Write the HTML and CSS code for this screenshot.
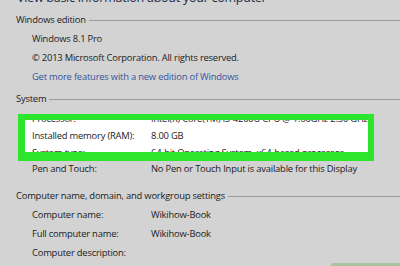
FILE: index.html
```html
<!DOCTYPE html>
<html>
<head>
<meta charset="utf-8">
<link rel="stylesheet" href="styles.css">
</head>
<body>
<div class="page">
  <div class="title">View basic information about your computer</div>

  <section class="group edition">
    <div class="heading">Windows edition</div>
    <div class="line">Windows 8.1 Pro</div>
    <div class="line">© 2013 Microsoft Corporation. All rights reserved.</div>
    <div class="line link">Get more features with a new edition of Windows</div>
  </section>

  <section class="group system">
    <div class="heading">System</div>
    <div class="highlight">
      <div class="rows">
        <div class="row"><span class="label">Processor:</span><span class="value">Intel(R) Core(TM) i5-4200U CPU @ 1.60GHz 2.30 GHz</span></div>
        <div class="row"><span class="label">Installed memory (RAM):</span><span class="value">8.00 GB</span></div>
        <div class="row"><span class="label">System type:</span><span class="value">64-bit Operating System, x64-based processor</span></div>
      </div>
    </div>
    <div class="row pen"><span class="label">Pen and Touch:</span><span class="value">No Pen or Touch Input is available for this Display</span></div>
  </section>

  <section class="group computer">
    <div class="heading">Computer name, domain, and workgroup settings</div>
    <div class="row tall"><span class="label">Computer name:</span><span class="value">Wikihow-Book</span></div>
    <div class="row tall"><span class="label">Full computer name:</span><span class="value">Wikihow-Book</span></div>
    <div class="row tall"><span class="label">Computer description:</span><span class="value"></span></div>
    <div class="row tall"><span class="label"></span><span class="value">WORKGROUP</span></div>
  </section>

  <div class="badge"></div>
</div>
</body>
</html>
```

FILE: styles.css
```css
html, body {
  margin: 0;
  padding: 0;
  background: #d3d3d3;
}
body {
  width: 400px;
  height: 266px;
  overflow: hidden;
  font-family: "Open Sans", "Noto Sans", sans-serif;
  font-size: 9.4px;
  letter-spacing: -0.2px;
  color: #1c1c1c;
}
.page {
  position: relative;
  height: 266px;
  overflow: hidden;
}
.title {
  margin: -9px 0 5px 17px;
  font-size: 12.5px;
  letter-spacing: -0.25px;
  line-height: 14px;
  color: #1d2d48;
  white-space: nowrap;
}
.heading {
  display: flex;
  align-items: center;
  padding-left: 16px;
  line-height: 19px;
  white-space: nowrap;
}
.heading::after {
  content: "";
  flex: 1;
  height: 1px;
  margin: 1px 0 0 3px;
  background: #9c9c9c;
}
.line {
  padding-left: 32px;
  line-height: 19px;
  white-space: nowrap;
}
.link {
  color: #34569f;
}
.system {
  margin-top: 3px;
}
.highlight {
  margin: 6px 0 0 18px;
  width: 343px;
  border: 6px solid #2ce52c;
  border-left-width: 7px;
  border-bottom-width: 9px;
  background: #ffffff;
  height: 32px;
  overflow: hidden;
}
.rows {
  margin-top: -10px;
}
.row {
  display: grid;
  grid-template-columns: 119px 1fr;
  padding-left: 32px;
  line-height: 17px;
  white-space: nowrap;
}
.highlight .row {
  padding-left: 7px;
}
.pen {
  margin-top: -1px;
}
.computer {
  margin-top: 9px;
}
.row.tall {
  line-height: 19px;
}
.badge {
  position: absolute;
  left: 331px;
  top: 263px;
  width: 80px;
  height: 12px;
  border-radius: 3px;
  background: #a9c39f;
}
```
